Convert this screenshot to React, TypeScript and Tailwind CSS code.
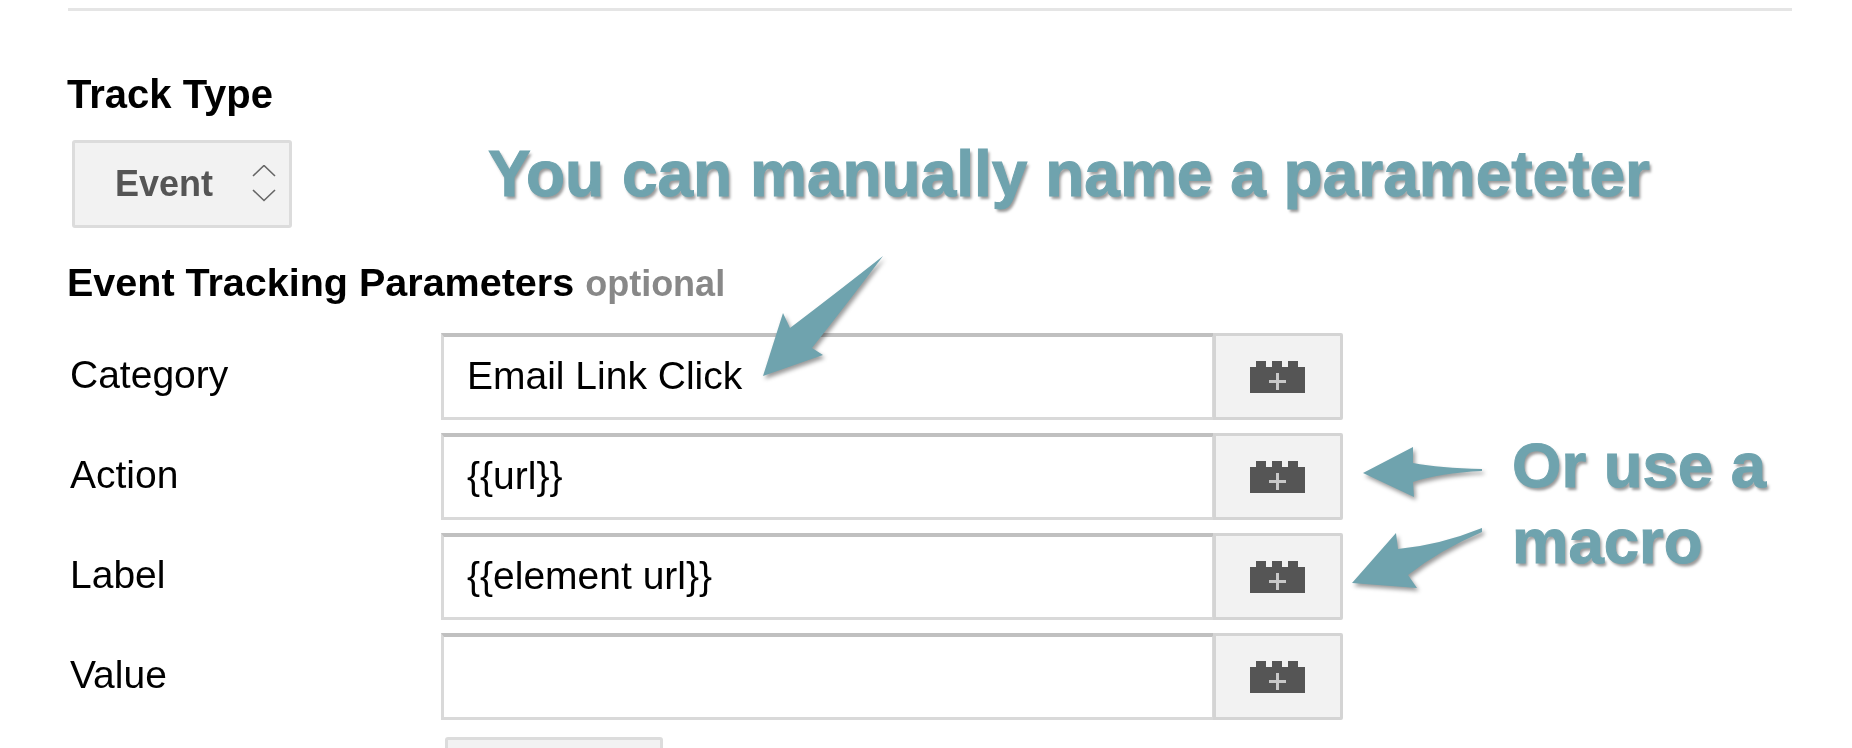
const rows = [
  { label: "Category", value: "Email Link Click" },
  { label: "Action", value: "{{url}}" },
  { label: "Label", value: "{{element url}}" },
  { label: "Value", value: "" },
];

function MacroIcon() {
  return (
    <svg width="56" height="34" viewBox="0 0 56 34">
      <path
        fill="#555555"
        d="M0 7H6V1H16V7H22V1H32V7H38V1H48V7H55V33H0Z"
      />
      <path fill="#c8c8c8" d="M19 20H26V13H29V20H36V23H29V30H26V23H19Z" />
    </svg>
  );
}

function Arrows() {
  return (
    <svg
      className="absolute left-0 top-0 drop-shadow-[2px_3px_2px_rgba(0,0,0,0.4)]"
      width="1852"
      height="748"
      viewBox="0 0 1852 748"
    >
      <path
        fill="#6fa3ae"
        d="M883 256Q840 290 790 328L783 313L763 376L823 355L812 348Q850 300 883 256Z"
      />
      <path
        fill="#6fa3ae"
        d="M1482 469Q1440 468 1413 463L1413 447L1363 473L1414 497L1413 482Q1440 473 1482 471Z"
      />
      <path
        fill="#6fa3ae"
        d="M1482 528Q1440 545 1398 549L1396 533L1352 583L1417 588L1408 575Q1440 550 1482 532Z"
      />
    </svg>
  );
}

export default function App() {
  return (
    <div className="relative w-[1852px] h-[748px] overflow-hidden bg-white pl-[68px] pt-[8px] font-['Liberation_Sans',Arial,sans-serif] text-black blur-[0.4px]">
      <div className="w-[1724px] h-[3px] bg-[#e5e5e5]"></div>

      {/* Track type */}
      <div className="mt-[61px] -ml-[1px] text-[40px] leading-[44px] font-bold">Track Type</div>
      <div className="mt-[24px] ml-[4px] w-[220px] h-[88px] flex items-center justify-between pl-[40px] pr-[13px] bg-[#f2f2f2] border-[3px] border-[#dcdcdc] rounded-[3px]">
        <span className="text-[36px] font-bold text-[#555555]">Event</span>
        <svg width="24" height="38" viewBox="0 0 24 38" fill="none" stroke="#666666" strokeWidth="1.6">
          <path d="M1 11L12 0.5L23 11" />
          <path d="M1 25L12 35.5L23 25" />
        </svg>
      </div>

      {/* Parameters */}
      <div className="mt-[32px] -ml-[1px] text-[39.5px] leading-[44px] font-bold">
        Event Tracking Parameters <span className="text-[#888888] text-[36px]">optional</span>
      </div>
      <div className="mt-[27px] flex flex-col gap-[13px]">
        {rows.map((row) => (
          <div key={row.label} className="flex items-center">
            <div className="w-[373px] pl-[2px] -mt-[2px] text-[39px]">{row.label}</div>
            <div className="w-[774px] h-[87px] flex items-center pl-[23px] pb-[2px] bg-white border-[3px] border-t-[4px] border-[#d9d9d9] border-t-[#c0c0c0] text-[39px]">
              {row.value}
            </div>
            <div className="w-[130px] h-[87px] -ml-[2px] flex items-center justify-center bg-[#f2f2f2] border-[3px] border-[#d4d4d4] rounded-r-[2px]">
              <MacroIcon />
            </div>
          </div>
        ))}
      </div>
      <div className="mt-[17px] ml-[377px] w-[218px] h-[60px] bg-[#f2f2f2] border-[3px] border-[#dcdcdc] rounded-[3px]"></div>

      {/* Annotations */}
      <Arrows />
      <div className="absolute left-[488px] top-[137px] text-[64px] leading-[74px] font-bold whitespace-nowrap text-[#6fa3ae] [-webkit-text-stroke:1px_#6fa3ae] [text-shadow:2px_3px_3px_rgba(0,0,0,0.4)]">
        You can manually name a parameteter
      </div>
      <div className="absolute left-[1512px] top-[427px] text-[63.5px] leading-[76px] font-bold text-[#6fa3ae] [-webkit-text-stroke:1px_#6fa3ae] [text-shadow:2px_3px_3px_rgba(0,0,0,0.4)]">
        Or use a
        <br />
        macro
      </div>
    </div>
  );
}
